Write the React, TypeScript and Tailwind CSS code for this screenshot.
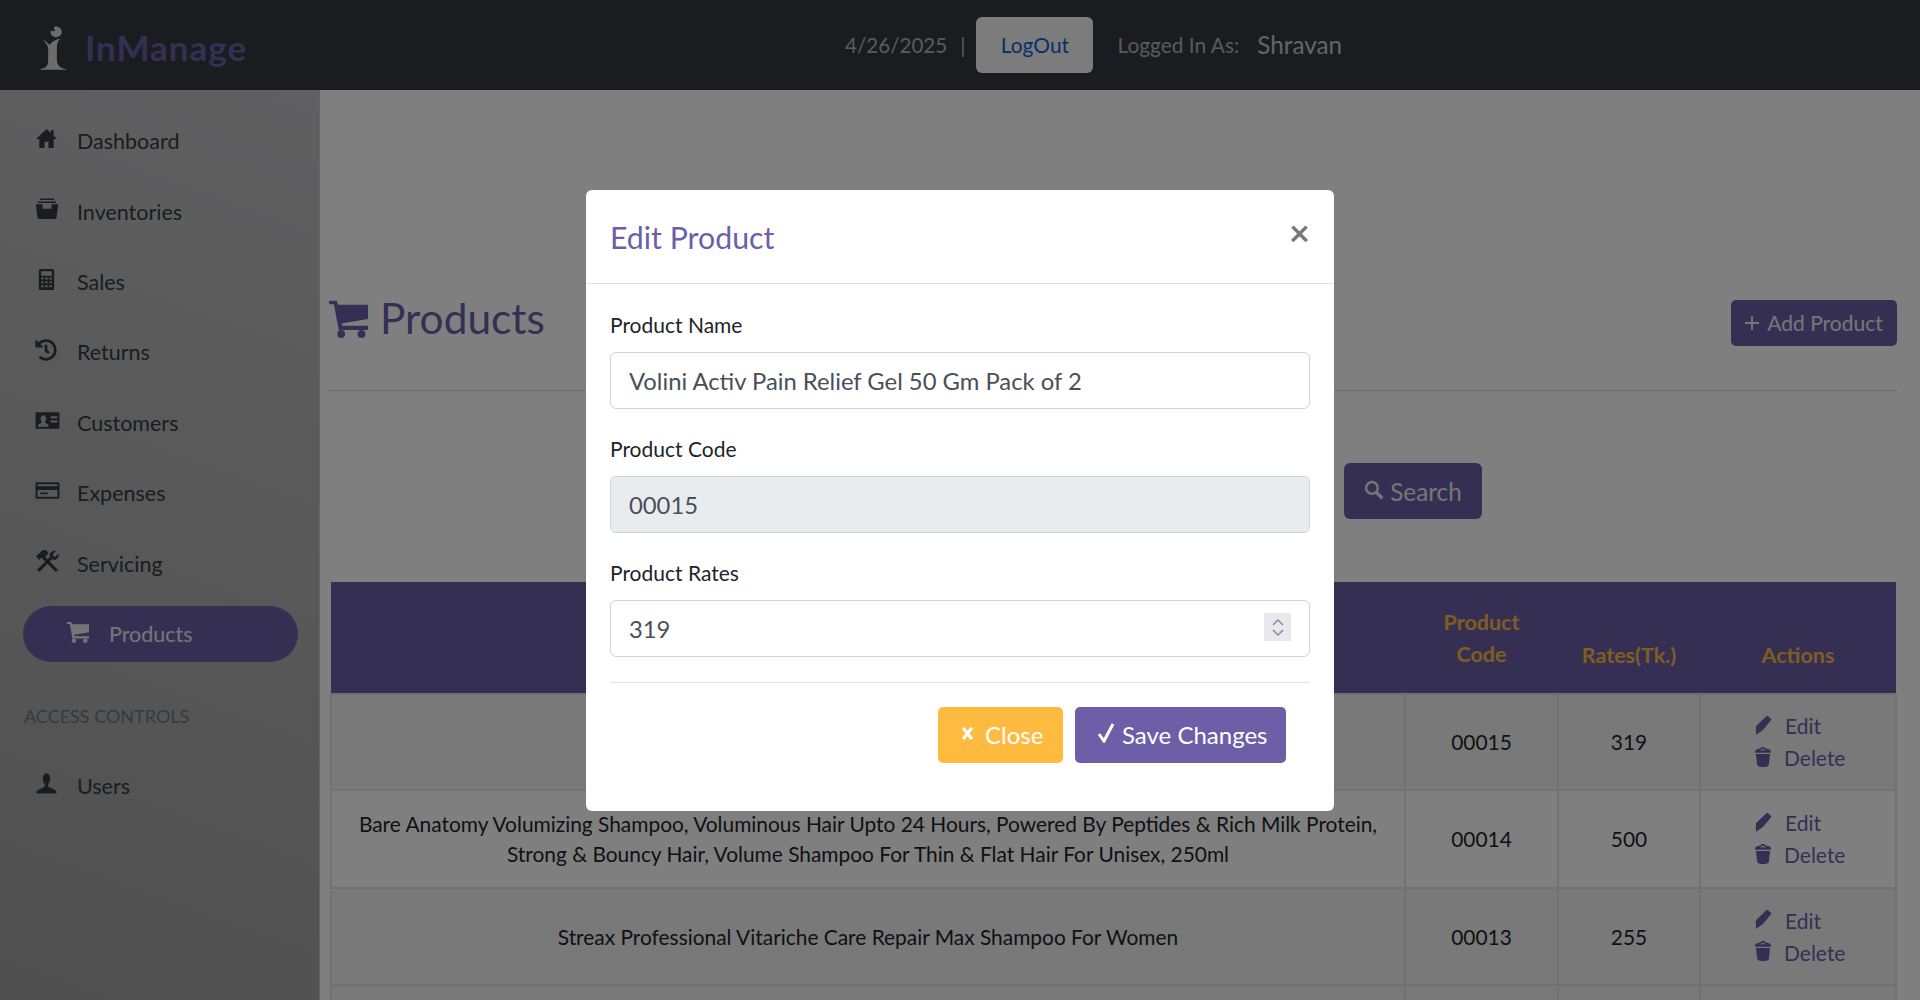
import React from 'react';
import { FaHistory } from 'react-icons/fa';

type IconProps = { className?: string };

const HomeIcon = ({ className }: IconProps) => (
    <svg viewBox="0 0 24 24" fill="currentColor" className={className}>
        <path d="M12 2 1 12.5h3.5V22H10v-6.5h4V22h5.5v-9.5H23l-3.5-3.3V3.5h-3v2.8z" />
    </svg>
);

const DrawerIcon = ({ className }: IconProps) => (
    <svg viewBox="0 0 24 24" fill="currentColor" className={className}>
        <path d="M5 1.5h14v1.6H5zM3 4.4h18V6H3zM0.8 7.3H7.5v3.5c0 .6.4 1 1 1h7c.6 0 1-.4 1-1V7.3h6.700l-1.600 13c-.1 1-.9 1.700-2 1.700H4.400c-1.100 0-1.900-.7-2-1.700z" />
    </svg>
);

const CalculatorIcon = ({ className }: IconProps) => (
    <svg viewBox="0 0 24 24" fill="currentColor" fillRule="evenodd" className={className}>
        <path d="M6 1h12c1.200 0 2 .8 2 2v18c0 1.200-.8 2-2 2H6c-1.200 0-2-.8-2-2V3c0-1.200.8-2 2-2zM6.500 3.500V8h11V3.500zM6.500 10v2h2.500v-2zM10.700 10v2h2.600v-2zM15 10v2h2.500v-2zM6.500 14v2h2.500v-2zM10.700 14v2h2.600v-2zM15 14v2h2.500v-2zM6.500 18v2h2.500v-2zM10.700 18v2h2.600v-2zM15 18v2h2.500v-2z" />
    </svg>
);

const IdCardIcon = ({ className }: IconProps) => (
    <svg viewBox="0 0 24 24" fill="currentColor" fillRule="evenodd" className={className}>
        <path d="M1.500 4h21c.5 0 1 .5 1 1v14c0 .5-.5 1-1 1h-21c-.5 0-1-.5-1-1V5c0-.5.5-1 1-1zM8 7c-1.700 0-2.600 1.300-2.600 3 0 1.200.4 2.200 1.100 2.900v1.100L3 16v2h10v-2l-3.500-2v-1.100c.7-.7 1.100-1.700 1.100-2.900 0-1.700-.9-3-2.600-3zM15 8v1.800h6.500V8zM15 12v1.800h6.500V12z" />
    </svg>
);

const CardIcon = ({ className }: IconProps) => (
    <svg viewBox="0 0 24 24" fill="currentColor" fillRule="evenodd" className={className}>
        <path d="M2 4h20c.9 0 1.500.6 1.500 1.500v13c0 .9-.6 1.500-1.500 1.500H2c-.9 0-1.500-.6-1.500-1.500v-13C.5 4.600 1.100 4 2 4zM2.500 6v2h19V6zM2.500 11.500V18h19v-6.500zM5 14h7v1.500H5z" />
    </svg>
);

const ToolsIcon = ({ className }: IconProps) => (
    <svg viewBox="0 0 24 24" className={className}>
        <path d="M7 7 21 21" stroke="currentColor" strokeWidth="3" />
        <path d="M1 7 7 1.500 10.500 1 13 4 8 9.500 6.500 8 4 10.500z" fill="currentColor" />
        <path d="M3 21 16 8" stroke="currentColor" strokeWidth="3" />
        <path d="M14 6.500C14 3.500 17 1 20 2l-3 3 .5 2 2 .5 3-3c1 3-1.500 6-4.500 6z" fill="currentColor" />
    </svg>
);

const CartIcon = ({ className }: IconProps) => (
    <svg viewBox="0 0 24 24" fill="currentColor" className={className}>
        <path d="M0 1h4.800l.7 2.500H24v8.800L7.800 15l.3 1.500H24V19H6L3 3.200H0z" />
        <circle cx="7.500" cy="21.500" r="2.400" />
        <circle cx="20" cy="21.500" r="2.400" />
    </svg>
);

const UserIcon = ({ className }: IconProps) => (
    <svg viewBox="0 0 24 24" fill="currentColor" className={className}>
        <path d="M12 1c-.5 0-.8.6-1.200.9C9 2.700 8.200 4.800 8.200 7c0 2.500.9 4.600 2 5.800v2.200c-1.800 1.500-6 3-7.700 4.200-.8.600-1 1.800-1 3.300h21c0-1.500-.2-2.700-1-3.300-1.700-1.200-5.900-2.700-7.700-4.200v-2.200c1.100-1.200 2-3.300 2-5.800 0-2.200-.8-4.300-2.600-5.100C12.800 1.600 12.500 1 12 1z" />
    </svg>
);

const SearchIcon = ({ className }: IconProps) => (
    <svg viewBox="0 0 24 24" fill="none" stroke="currentColor" className={className}>
        <circle cx="9.500" cy="9.500" r="7" strokeWidth="3" />
        <path d="M14.500 14.500 22 22" strokeWidth="4" />
    </svg>
);

const PencilIcon = ({ className }: IconProps) => (
    <svg viewBox="0 0 24 24" fill="currentColor" className={className}>
        <path d="M16 1.500c.6-.6 1.400-.6 2 0l3.500 3c.6.600.6 1.400 0 2L12 18l-8 5.500-.5-.5V13.500z" />
    </svg>
);

const TrashIcon = ({ className }: IconProps) => (
    <svg viewBox="0 0 24 24" fill="currentColor" fillRule="evenodd" className={className}>
        <path d="M12 0c1.300 0 2.300.6 2.700 1.500 3.400.4 6.300 1.700 6.800 3.400V7h-19V4.900c.5-1.700 3.400-3 6.800-3.400C9.700.6 10.700 0 12 0zM12 2.500c-1 0-3 .7-3.500 1.800 2-.6 5-.6 7 0-.5-1.100-2.500-1.800-3.500-1.800z" />
        <path d="M3.500 8.500h17L19 21.500C18.700 23 16 24 12 24s-6.700-1-7-2.500z" />
    </svg>
);

const LogoMark = ({ className }: IconProps) => (
    <svg viewBox="0 0 30 46" fill="currentColor" className={className}>
        <path d="M16 1c4-1 8 2 7.500 6-.5 3.500-4 5.500-7.500 4.500C12.500 10.500 11 7 12.500 5c1.500 1 3 1 4.500 0-1.500-1-2-2.500-1-4z" />
        <path d="M4 15c3 .5 5.500 2.500 7 5 2-3 6-6 11-6.500-2.500 2.500-3.500 5-3.500 9v12c0 5 1.500 8 6 9.500 2 .5 3.500 1 4.500 1.500H0c1-.5 2.500-1 4.500-1.500 3.500-1 5-4 5-8V24c0-3-2-6.500-5.500-9z" />
    </svg>
);

const navItems = [
    { label: 'Dashboard', icon: <HomeIcon className="size-[23px]" /> },
    { label: 'Inventories', icon: <DrawerIcon className="size-[24px]" /> },
    { label: 'Sales', icon: <CalculatorIcon className="size-[23px]" /> },
    { label: 'Returns', icon: <FaHistory className="size-[22px]" /> },
    { label: 'Customers', icon: <IdCardIcon className="size-[25px]" /> },
    { label: 'Expenses', icon: <CardIcon className="size-[25px]" /> },
    { label: 'Servicing', icon: <ToolsIcon className="size-[25px]" /> },
];

const products = [
    { name: 'Volini Activ Pain Relief Gel 50 Gm Pack of 2', code: '00015', rate: '319', height: 'h-[96px]' },
    {
        name: 'Bare Anatomy Volumizing Shampoo, Voluminous Hair Upto 24 Hours, Powered By Peptides & Rich Milk Protein, Strong & Bouncy Hair, Volume Shampoo For Thin & Flat Hair For Unisex, 250ml',
        code: '00014',
        rate: '500',
        height: 'h-[98px]',
    },
    { name: 'Streax Professional Vitariche Care Repair Max Shampoo For Women', code: '00013', rate: '255', height: 'h-[97px]' },
];

const SideLink: React.FC<{ label: string; icon: React.ReactNode }> = ({ label, icon }) => (
    <a className="flex h-[70.4px] items-center pl-[35px] text-[21.5px] text-[#343a40]">
        <span className="mb-[5px] flex w-[42px] justify-start">{icon}</span>
        <span>{label}</span>
    </a>
);

const Field: React.FC<{ label: string; value: string; disabled?: boolean; spinner?: boolean }> = ({ label, value, disabled, spinner }) => (
    <div className="mb-[25px]">
        <label className="mb-[12px] block h-[30px] text-[21px] leading-[30px] text-[#212529]">{label}</label>
        <div className="relative">
            <input
                readOnly
                value={value}
                className={`block h-[57px] w-full rounded-[6px] border border-[#ced4da] px-[18px] text-[23.800px] text-[#495057] outline-none ${disabled ? 'bg-[#e9ecef]' : 'bg-white'}`}
            />
            {spinner && (
                <div className="absolute top-[13px] right-[19px] flex h-[28px] w-[27px] flex-col items-center justify-center gap-[3px] bg-[#e9e9ed] text-[#8b8b96]">
                    <svg viewBox="0 0 12 7" className="h-[7px] w-[12px]" fill="none" stroke="currentColor" strokeWidth="1.500"><path d="M1 6 6 1l5 5" /></svg>
                    <svg viewBox="0 0 12 7" className="h-[7px] w-[12px]" fill="none" stroke="currentColor" strokeWidth="1.500"><path d="M1 1l5 5 5-5" /></svg>
                </div>
            )}
        </div>
    </div>
);

const App: React.FC = () => {
    return (
        <div className="h-screen overflow-hidden bg-white font-['Lato','Liberation_Sans',sans-serif] text-[20.900px] leading-[30px] text-[#212529]">
            {/* Header */}
            <header className="flex h-[90px] items-center bg-[#343a40]">
                <div className="flex w-[845px] items-center pl-[39px]">
                    <LogoMark className="mt-[6px] h-[46px] w-[29px] text-[#d8d8d8]" />
                    <span className="ml-[17px] mt-[3px] text-[35px] font-bold tracking-[1px] text-[#6c5fa8]">InManage</span>
                </div>
                <span className="text-[20.600px] text-[#b5b5b5]">4/26/2025</span>
                <span className="ml-[13px] text-[20.800px] text-[#b5b5b5]">|</span>
                <button className="ml-[11px] h-[56px] w-[117px] rounded-[6px] bg-[#f8f9fa] text-[#0e63c8]">LogOut</button>
                <span className="ml-[24px] text-[#b5b5b5]">Logged In As:</span>
                <span className="ml-[18px] text-[24.300px] text-[#c8c8c8]">Shravan</span>
            </header>

            <div className="flex h-[910px]">
                {/* Sidebar */}
                <aside className="w-[320px] shrink-0 border-r border-[#c8c8c8] bg-[linear-gradient(200deg,#c0c0c3,#a0a0a0)] pt-[16px]">
                    {navItems.map(item => (
                        <SideLink key={item.label} label={item.label} icon={item.icon} />
                    ))}
                    <a className="mx-[23px] mt-[7px] flex h-[56px] w-[275px] items-center rounded-full bg-[#6c5fa8] pl-[44px] text-[21.500px] text-[#ededed]">
                        <CartIcon className="mb-[3px] size-[22px]" />
                        <span className="ml-[20px]">Products</span>
                    </a>
                    <div className="mt-[41px] pl-[24px] text-[18px] uppercase leading-[27px] text-[#6c757d]">Access Controls</div>
                    <div className="mt-[21px]">
                        <SideLink label="Users" icon={<UserIcon className="size-[23px]" />} />
                    </div>
                </aside>

                {/* Main */}
                <main className="min-w-0 flex-1 pl-[9px] pr-[23px] pt-[202px]">
                    <div className="mb-[31px] flex h-[68px] items-start justify-between">
                        <h1 className="flex items-center text-[42.400px] leading-[51px] text-[#6c5fa8]">
                            <CartIcon className="mr-[12px] mt-[1px] size-[39px]" />
                            Products
                        </h1>
                        <button className="mt-[8px] flex h-[46px] w-[166px] items-center justify-center gap-[8px] rounded-[5px] bg-[#6c5fa8] text-[21px] text-[#ededed]">
                            <svg viewBox="0 0 14 14" className="size-[14px]" stroke="currentColor" strokeWidth="1.800"><path d="M7 0v14M0 7h14" /></svg>
                            Add Product
                        </button>
                    </div>
                    <hr className="mt-[-1px] border-[#d8d8d8]" />
                    <div className="mt-[72px] flex justify-end pr-[415px]">
                        <button className="flex h-[56px] w-[138px] items-center justify-center gap-[6px] rounded-[6px] bg-[#6c5fa8] pt-[2px] text-[24.300px] text-[#ededed]">
                            <SearchIcon className="mb-[4px] size-[20px]" />
                            Search
                        </button>
                    </div>
                    <table className="ml-[1px] mt-[63px] w-[1565px] table-fixed border-collapse text-center">
                        <colgroup>
                            <col className="w-[1074px]" />
                            <col className="w-[153px]" />
                            <col className="w-[142px]" />
                            <col className="w-[196px]" />
                        </colgroup>
                        <thead>
                            <tr className="h-[112px] bg-[#6c5fa8] align-bottom text-[21.500px] text-[#ffbb3f]">
                                <th className="pb-[23px] font-bold">Product Name</th>
                                <th className="px-[30px] pb-[23px] font-bold leading-[32px]">Product Code</th>
                                <th className="pb-[23px] font-bold">Rates(Tk.)</th>
                                <th className="pb-[23px] font-bold">Actions</th>
                            </tr>
                        </thead>
                        <tbody>
                            {products.map((p, i) => (
                                <tr key={p.code} className={`${p.height} ${i % 2 === 0 ? 'bg-black/5' : ''}`}>
                                    <td className="border-2 border-[#dee2e6] px-[18px]">{p.name}</td>
                                    <td className="border-2 border-[#dee2e6] text-[#212529]">{p.code}</td>
                                    <td className="border-2 border-[#dee2e6]">{p.rate}</td>
                                    <td className="border-2 border-[#dee2e6] pl-[52px] text-left text-[21px] leading-[32px] text-[#6c5fa8]">
                                        <div className="flex items-center">
                                            <PencilIcon className="mb-[3px] size-[20px]" />
                                            <span className="ml-[12px]">Edit</span>
                                        </div>
                                        <div className="flex items-center">
                                            <TrashIcon className="mb-[3px] size-[20px]" />
                                            <span className="ml-[11px]">Delete</span>
                                        </div>
                                    </td>
                                </tr>
                            ))}
                            <tr className="h-[97px] bg-black/5">
                                <td className="border-2 border-[#dee2e6]"></td>
                                <td className="border-2 border-[#dee2e6]"></td>
                                <td className="border-2 border-[#dee2e6]"></td>
                                <td className="border-2 border-[#dee2e6]"></td>
                            </tr>
                        </tbody>
                    </table>
                </main>
            </div>

            {/* Edit modal */}
            <div className="fixed inset-0 flex justify-center bg-black/50 pt-[190px]">
                <div className="h-[621px] w-[748px] rounded-[6px] bg-white">
                    <div className="flex h-[94px] items-center justify-between border-b border-[#dee2e6] px-[24px]">
                        <h5 className="text-[30.300px] leading-[36px] text-[#6c5fa8]">Edit Product</h5>
                        <button className="mb-[10px] text-[36px] font-bold leading-none text-[#777]">×</button>
                    </div>
                    <div className="px-[24px] pt-[26px]">
                        <Field label="Product Name" value="Volini Activ Pain Relief Gel 50 Gm Pack of 2" />
                        <Field label="Product Code" value="00015" disabled />
                        <Field label="Product Rates" value="319" spinner />
                        <hr className="border-[#dee2e6]" />
                        <div className="mt-[24px] flex justify-end gap-[12px] pr-[24px]">
                            <button className="flex h-[56px] w-[125px] items-center gap-[11px] rounded-[5px] bg-[#ffbb3f] pl-[23px] text-[24px] text-white">
                                <svg viewBox="0 0 12 12" className="mb-[4px] size-[13px]" stroke="currentColor" strokeWidth="3"><path d="M2 1l8 10M10 1 2 11" /></svg>
                                Close
                            </button>
                            <button className="flex h-[56px] w-[211px] items-center gap-[7px] rounded-[5px] bg-[#6c5fa8] pl-[22px] text-[24px] text-white">
                                <svg viewBox="0 0 18 20" className="mb-[4px] h-[20px] w-[18px]" fill="none" stroke="currentColor" strokeWidth="3"><path d="M2 11l5 7L16 1" /></svg>
                                Save Changes
                            </button>
                        </div>
                    </div>
                </div>
            </div>
        </div>
    );
};

export default App;
